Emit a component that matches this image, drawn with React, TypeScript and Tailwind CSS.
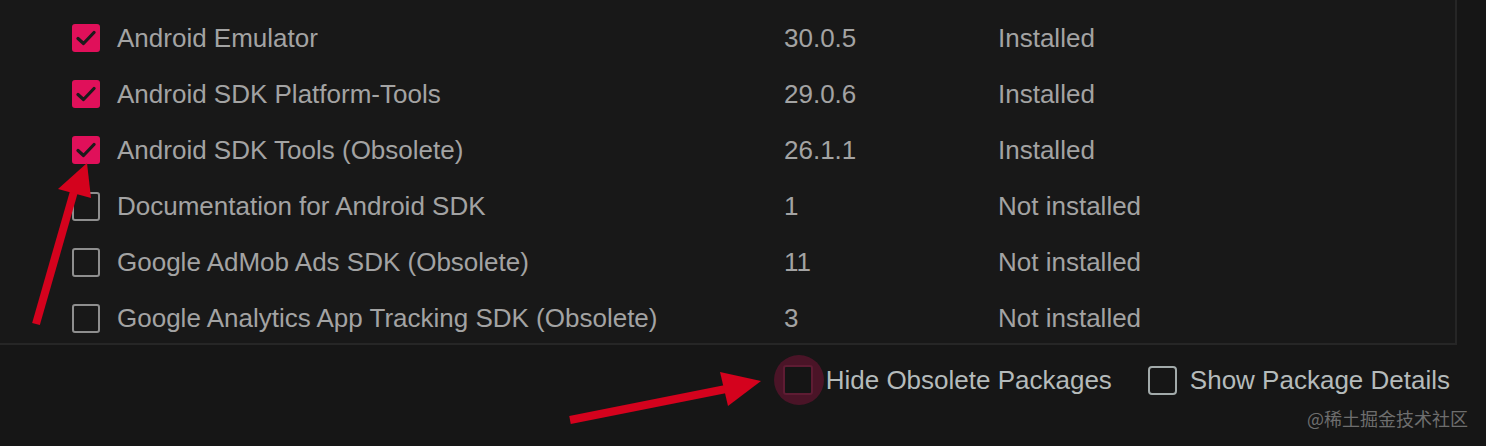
import React from "react"

type Pkg = { name: string; version: string; status: string; checked: boolean }

const packages: Pkg[] = [
  { name: "Android Emulator", version: "30.0.5", status: "Installed", checked: true },
  { name: "Android SDK Platform-Tools", version: "29.0.6", status: "Installed", checked: true },
  { name: "Android SDK Tools (Obsolete)", version: "26.1.1", status: "Installed", checked: true },
  { name: "Documentation for Android SDK", version: "1", status: "Not installed", checked: false },
  { name: "Google AdMob Ads SDK (Obsolete)", version: "11", status: "Not installed", checked: false },
  { name: "Google Analytics App Tracking SDK (Obsolete)", version: "3", status: "Not installed", checked: false },
]

function CheckBox({ checked }: { checked: boolean }) {
  if (checked) {
    return (
      <div className="w-[28px] h-[28px] rounded-[3px] bg-[#e0105a] flex items-center justify-center shrink-0">
        <svg width="20" height="16" viewBox="0 0 20 16" fill="none">
          <path d="M2 8.5 L7.5 13.5 L18 2.5" stroke="#1b1b1b" strokeWidth="3.2" strokeLinecap="round" strokeLinejoin="round" />
        </svg>
      </div>
    )
  }
  return <div className="w-[28px] h-[29px] rounded-[3px] border-2 border-[#8e8e8e] shrink-0" />
}

export default function App() {
  return (
    <div className="relative w-[1486px] h-[446px] bg-[#161616] overflow-hidden font-['Liberation_Sans',Arial,sans-serif]">
      {/* package table */}
      <div className="w-[1457px] h-[345px] bg-[#181818] border-r-2 border-b-2 border-[#262626] pt-[10px]">
        {packages.map((p) => (
          <div key={p.name} className="h-14 flex items-center pl-[72px] text-[26px] text-[#a3a3a3]">
            <CheckBox checked={p.checked} />
            <span className="ml-[17px] w-[667px] whitespace-nowrap">{p.name}</span>
            <span className="w-[214px]">{p.version}</span>
            <span>{p.status}</span>
          </div>
        ))}
      </div>

      {/* bottom options */}
      <div className="flex items-center justify-end h-[70px] pr-[36px] text-[26px] text-[#b5bbbb]">
        <div className="flex items-center">
          <div className="relative w-[30px] h-[30px]">
            <div className="absolute -left-[9px] -top-[10px] w-[50px] h-[50px] rounded-full bg-[#4a1427]" />
            <div className="absolute inset-0 rounded-[3px] bg-[#151515] border-2 border-[#5e1c33]" />
          </div>
          <span className="ml-[13px]">Hide Obsolete Packages</span>
        </div>
        <div className="flex items-center ml-[36px]">
          <div className="w-[29px] h-[29px] rounded-[4px] border-2 border-[#a2aaaa]" />
          <span className="ml-[13px]">Show Package Details</span>
        </div>
      </div>

      <div className="flex justify-end pr-[18px] -mt-[10px] text-[18px] text-[#6e6e6e] font-['Noto_Sans_CJK_SC',sans-serif]">
        @稀土掘金技术社区
      </div>

      {/* annotation arrows */}
      <svg className="absolute inset-0 pointer-events-none" width="1486" height="446" viewBox="0 0 1486 446">
        <line x1="36" y1="324" x2="75" y2="188" stroke="#d4021d" strokeWidth="8" />
        <polygon points="87,163 58,189 91,198" fill="#d4021d" />
        <line x1="570" y1="420" x2="726" y2="389" stroke="#d4021d" strokeWidth="8" />
        <polygon points="761,381 720,372 728,406" fill="#d4021d" />
      </svg>
    </div>
  )
}
